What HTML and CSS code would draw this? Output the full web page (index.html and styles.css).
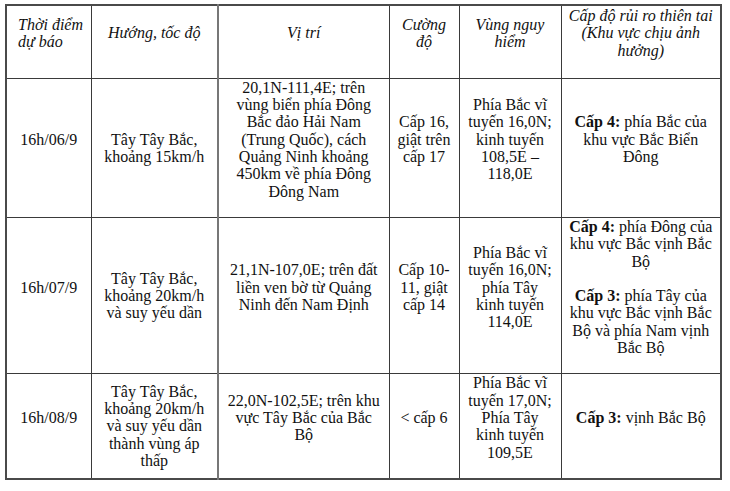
FILE: index.html
```html
<!DOCTYPE html>
<html lang="vi">
<head>
<meta charset="utf-8">
<link rel="stylesheet" href="styles.css">
</head>
<body>
<table class="forecast">
  <colgroup>
    <col class="c1"><col class="c2"><col class="c3"><col class="c4"><col class="c5"><col class="c6">
  </colgroup>
  <thead>
    <tr>
      <th class="time">Thời điểm<br>dự báo</th>
      <th>Hướng, tốc độ</th>
      <th class="pos">Vị trí</th>
      <th>Cường<br>độ</th>
      <th>Vùng nguy<br>hiểm</th>
      <th>Cấp độ rủi ro thiên tai<br>(Khu vực chịu ảnh<br>hưởng)</th>
    </tr>
  </thead>
  <tbody>
    <tr>
      <td>16h/06/9</td>
      <td class="dir">Tây Tây Bắc,<br>khoảng 15km/h</td>
      <td class="pos">20,1N-111,4E; trên<br>vùng biển phía Đông<br>Bắc đảo Hải Nam<br>(Trung Quốc), cách<br>Quảng Ninh khoảng<br>450km về phía Đông<br>Đông Nam</td>
      <td>Cấp 16,<br>giật trên<br>cấp 17</td>
      <td>Phía Bắc vĩ<br>tuyến 16,0N;<br>kinh tuyến<br>108,5E –<br>118,0E</td>
      <td><b>Cấp 4:</b> phía Bắc của<br>khu vực Bắc Biển<br>Đông</td>
    </tr>
    <tr>
      <td>16h/07/9</td>
      <td class="dir">Tây Tây Bắc,<br>khoảng 20km/h<br>và suy yếu dần</td>
      <td class="pos">21,1N-107,0E; trên đất<br>liền ven bờ từ Quảng<br>Ninh đến Nam Định</td>
      <td>Cấp 10-<br>11, giật<br>cấp 14</td>
      <td>Phía Bắc vĩ<br>tuyến 16,0N;<br>phía Tây<br>kinh tuyến<br>114,0E</td>
      <td><p class="para"><b>Cấp 4:</b> phía Đông của<br>khu vực Bắc vịnh Bắc<br>Bộ</p><p class="para"><b>Cấp 3:</b> phía Tây của<br>khu vực Bắc vịnh Bắc<br>Bộ và phía Nam vịnh<br>Bắc Bộ</p></td>
    </tr>
    <tr>
      <td>16h/08/9</td>
      <td class="dir">Tây Tây Bắc,<br>khoảng 20km/h<br>và suy yếu dần<br>thành vùng áp<br>thấp</td>
      <td class="pos">22,0N-102,5E; trên khu<br>vực Tây Bắc của Bắc<br>Bộ</td>
      <td>&lt; cấp 6</td>
      <td>Phía Bắc vĩ<br>tuyến 17,0N;<br>Phía Tây<br>kinh tuyến<br>109,5E</td>
      <td><b>Cấp 3:</b> vịnh Bắc Bộ</td>
    </tr>
  </tbody>
</table>
</body>
</html>
```

FILE: styles.css
```css
html, body {
  margin: 0;
  padding: 0;
  background: #ffffff;
}

body {
  padding: 4px 0 0 5px;
  font-family: "Liberation Serif", "Times New Roman", serif;
  font-size: 16px;
  line-height: 17.3px;
  color: #111;
}

.forecast {
  border-collapse: collapse;
  table-layout: fixed;
  width: 715px;
  border: 2px solid #4a4a4a;
}

.c1 { width: 85px; }
.c2 { width: 127px; }
.c3 { width: 171px; }
.c4 { width: 70px; }
.c5 { width: 102px; }
.c6 { width: 160px; }

th, td {
  border: 1px solid #3a3a3a;
  text-align: center;
  vertical-align: middle;
  padding: 0 2px 17px 2px;
  white-space: nowrap;
}

th {
  font-weight: normal;
  font-style: italic;
  padding-top: 1px;
  padding-bottom: 19px;
}

th.time {
  text-align: left;
  padding-left: 11px;
}

.pos {
  border-left: 2px solid #777;
}

td.dir {
  padding-bottom: 0;
}

.para {
  margin: 0;
}

.para + .para {
  margin-top: 17.3px;
}

b {
  font-weight: bold;
}
```
